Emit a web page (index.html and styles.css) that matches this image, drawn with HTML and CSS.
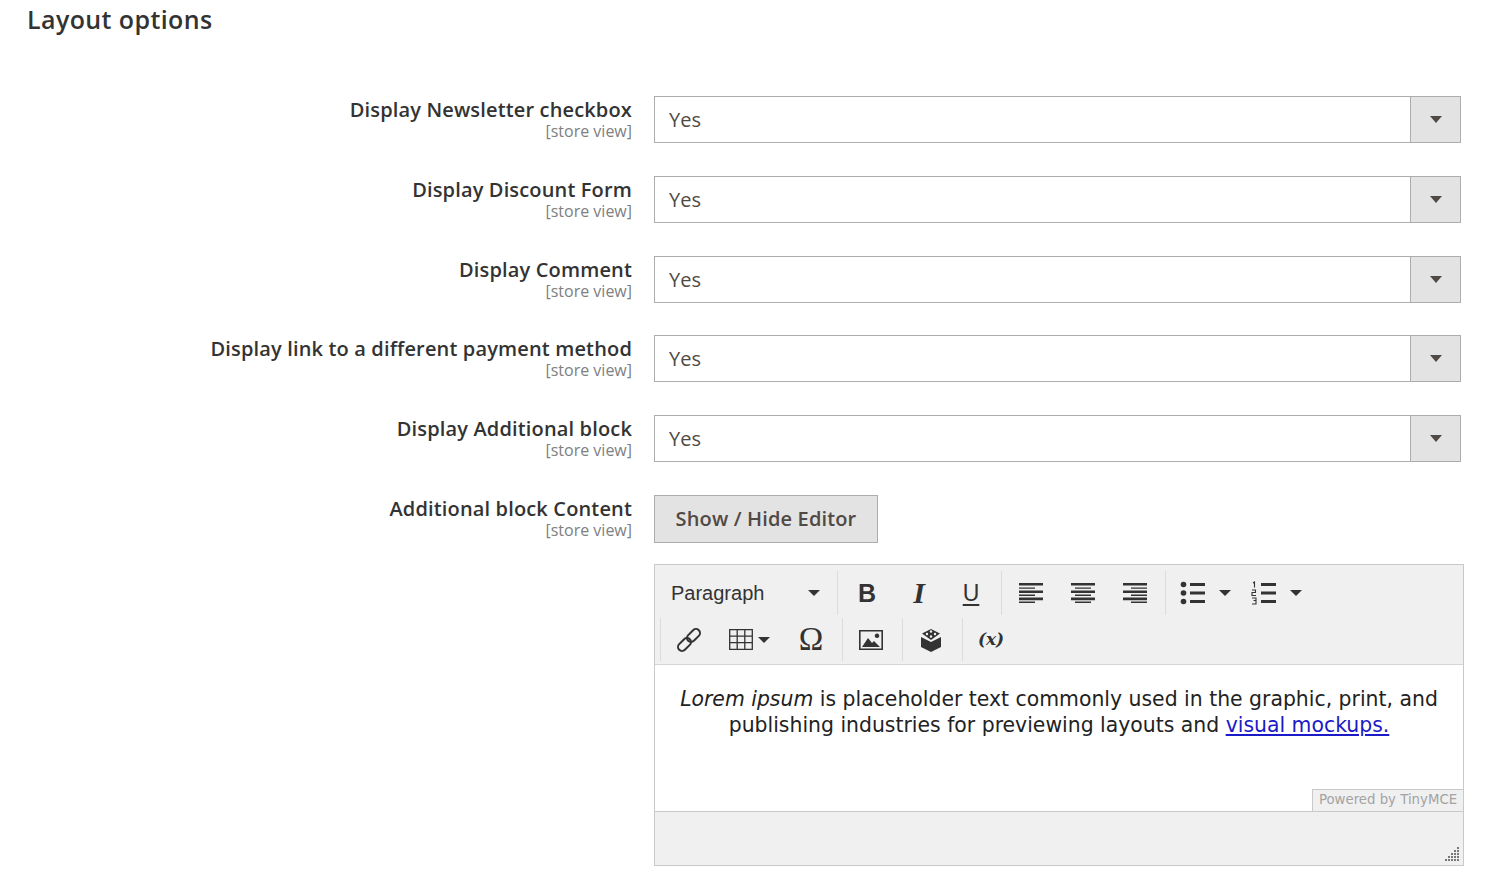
FILE: index.html
```html
<!DOCTYPE html>
<html lang="en">
<head>
    <meta charset="UTF-8">
    <title>Layout options</title>
    <link rel="stylesheet" href="styles.css">
</head>
<body>
    <h1 class="section-title">Layout options</h1>

    <div class="form-row">
        <div class="field-label"><label>Display Newsletter checkbox</label><span class="scope">[store view]</span></div>
        <div class="select-box"><select><option>Yes</option><option>No</option></select><span class="select-arrow"></span></div>
    </div>
    <div class="form-row">
        <div class="field-label"><label>Display Discount Form</label><span class="scope">[store view]</span></div>
        <div class="select-box"><select><option>Yes</option><option>No</option></select><span class="select-arrow"></span></div>
    </div>
    <div class="form-row">
        <div class="field-label"><label>Display Comment</label><span class="scope">[store view]</span></div>
        <div class="select-box"><select><option>Yes</option><option>No</option></select><span class="select-arrow"></span></div>
    </div>
    <div class="form-row">
        <div class="field-label"><label>Display link to a different payment method</label><span class="scope">[store view]</span></div>
        <div class="select-box"><select><option>Yes</option><option>No</option></select><span class="select-arrow"></span></div>
    </div>
    <div class="form-row">
        <div class="field-label"><label>Display Additional block</label><span class="scope">[store view]</span></div>
        <div class="select-box"><select><option>Yes</option><option>No</option></select><span class="select-arrow"></span></div>
    </div>

    <div class="form-row editor-row">
        <div class="field-label"><label>Additional block Content</label><span class="scope">[store view]</span></div>
        <div class="editor-col">
            <button class="toggle-btn">Show / Hide Editor</button>
            <div class="editor">
                <div class="toolbar">
                    <div class="tool-row">
                        <div class="format-select">Paragraph<span class="caret"></span></div>
                        <div class="tool-group">
                            <span class="tool tool-bold">B</span>
                            <span class="tool tool-italic">I</span>
                            <span class="tool tool-underline">U</span>
                        </div>
                        <div class="tool-group">
                            <span class="tool">
                                <svg width="26" height="22" viewBox="0 0 26 22"><path fill="#333" d="M1 1h24v2.600H1zM1 5.400h16v1.400H1zM1 8.400h24v2.600H1zM1 12.600h16v1.400H1zM1 15.600h24v2.600H1zM1 19.400h16V21H1z"/></svg>
                            </span>
                            <span class="tool">
                                <svg width="26" height="22" viewBox="0 0 26 22"><path fill="#333" d="M1 1h24v2.600H1zM5 5.400h16v1.400H5zM1 8.400h24v2.600H1zM5 12.600h16v1.400H5zM1 15.600h24v2.600H1zM5 19.400h16V21H5z"/></svg>
                            </span>
                            <span class="tool">
                                <svg width="26" height="22" viewBox="0 0 26 22"><path fill="#333" d="M1 1h24v2.600H1zM9 5.400h16v1.400H9zM1 8.400h24v2.600H1zM9 12.600h16v1.400H9zM1 15.600h24v2.600H1zM9 19.400h16V21H9z"/></svg>
                            </span>
                        </div>
                        <div class="tool-group">
                            <span class="tool tool-split">
                                <svg width="26" height="24" viewBox="0 0 26 24"><circle cx="3.500" cy="3.500" r="2.800" fill="#333"/><circle cx="3.500" cy="12" r="2.800" fill="#333"/><circle cx="3.500" cy="20.500" r="2.800" fill="#333"/><path fill="#333" d="M10 2h15v3H10zM10 10.500h15v3H10zM10 19h15v3H10z"/></svg>
                            </span>
                            <span class="tool-caret"><span class="caret"></span></span>
                            <span class="tool tool-split">
                                <svg width="26" height="24" viewBox="0 0 26 24"><path fill="none" stroke="#333" stroke-width="1.100" d="M2 2l1.500-1V6.500M1 9h3.500v2.500H1V14.500h4M1 17h4v2.500H2.500H5V23H1"/><path fill="#333" d="M10 2h15v3H10zM10 10.500h15v3H10zM10 19h15v3H10z"/></svg>
                            </span>
                            <span class="tool-caret"><span class="caret"></span></span>
                        </div>
                    </div>
                    <div class="tool-row tool-row-second">
                        <div class="tool-group">
                            <span class="tool">
                                <svg width="26" height="26" viewBox="0 0 26 26"><g fill="none" stroke="#333" stroke-width="2"><rect x="1" y="13.500" width="15" height="8" rx="4" transform="rotate(-45 8.500 17.500)"/><rect x="10" y="4.500" width="15" height="8" rx="4" transform="rotate(-45 17.500 8.500)"/></g></svg>
                            </span>
                            <span class="tool tool-table">
                                <svg width="24" height="21" viewBox="0 0 24 21"><path fill="none" stroke="#333" stroke-width="1.300" d="M.700.700h22.600v19.600H.700zM.700 7.200h22.600M.700 13.700h22.600M8.200.700v19.600M15.800.700v19.600"/></svg>
                                <span class="caret"></span>
                            </span>
                            <span class="tool tool-omega">Ω</span>
                        </div>
                        <div class="tool-group">
                            <span class="tool">
                                <svg width="24" height="20" viewBox="0 0 24 20"><path fill="none" stroke="#333" stroke-width="1.600" d="M.800.800h22.400v18.400H.800z"/><path fill="#333" d="M3 17l6-9 4 5 2-2 6 6zM18 3.500a2.300 2.300 0 1 0 .010 0z"/></svg>
                            </span>
                        </div>
                        <div class="tool-group">
                            <span class="tool">
                                <svg width="22" height="24" viewBox="0 0 22 24"><path fill="#333" d="M1 9l10 5 10-5v10l-10 5-10-5z"/><path fill="#333" d="M11 1l9 4.500-9 6.500-9-6.500z"/><g fill="#f0f0f0"><circle cx="11" cy="3.500" r="1.200"/><circle cx="7" cy="6" r="1.200"/><circle cx="15" cy="6" r="1.200"/><circle cx="11" cy="8.500" r="1.200"/></g></svg>
                            </span>
                        </div>
                        <div class="tool-group">
                            <span class="tool tool-variable">(x)</span>
                        </div>
                    </div>
                </div>
                <div class="editor-body">
                    <p><em>Lorem ipsum</em> is placeholder text commonly used in the graphic, print, and publishing industries for previewing layouts and <a href="#">visual mockups.</a></p>
                    <div class="powered">Powered by TinyMCE</div>
                </div>
                <div class="editor-footer">
                    <svg class="resize-grip" width="16" height="16" viewBox="0 0 16 16"><path fill="#777" d="M13 1h2v2h-2zM13 4h2v2h-2zM10 4h2v2h-2zM13 7h2v2h-2zM10 7h2v2h-2zM7 7h2v2H7zM13 10h2v2h-2zM10 10h2v2h-2zM7 10h2v2H7zM4 10h2v2H4zM13 13h2v2h-2zM10 13h2v2h-2zM7 13h2v2H7zM4 13h2v2H4zM1 13h2v2H1z"/></svg>
                </div>
            </div>
        </div>
    </div>
</body>
</html>
```

FILE: styles.css
```css
body {
    margin: 0;
    padding: 4px 47px 0 0;
    background-color: #fff;
    font-family: "Open Sans", sans-serif;
    color: #303030;
}

.section-title {
    margin: 0 0 62px 27px;
    font-size: 25px;
    line-height: 30px;
    font-weight: 600;
    letter-spacing: 0.4px;
    color: #333;
}

.form-row {
    display: grid;
    grid-template-columns: 632px 1fr;
    column-gap: 22px;
    margin-bottom: 32.75px;
}

.field-label {
    display: flex;
    flex-direction: column;
    align-items: flex-end;
}

.field-label label {
    font-size: 20px;
    line-height: 27px;
    font-weight: 600;
    letter-spacing: 0.15px;
    color: #333;
}

.scope {
    font-size: 16px;
    line-height: 17px;
    color: #808080;
}

.select-box {
    display: flex;
    height: 47px;
    box-sizing: border-box;
    border: 1px solid #adadad;
}

.select-box select {
    flex: 1;
    appearance: none;
    border: none;
    background: #fff;
    padding: 0 14px;
    font-family: "Open Sans", sans-serif;
    font-size: 20px;
    color: #514943;
}

.select-arrow {
    width: 49px;
    display: flex;
    align-items: center;
    justify-content: center;
    background-color: #e3e3e3;
    border-left: 1px solid #adadad;
}

.select-arrow::after {
    content: "";
    border-style: solid;
    border-width: 7px 6px 0 6px;
    border-color: #514943 transparent transparent transparent;
}

.editor-row {
    margin-bottom: 0;
}

.editor-col {
    display: flex;
    flex-direction: column;
    align-items: flex-start;
}

.toggle-btn {
    height: 48px;
    width: 224px;
    padding: 0;
    background-color: #e3e3e3;
    border: 1px solid #adadad;
    font-family: "Open Sans", sans-serif;
    font-size: 20px;
    font-weight: 600;
    letter-spacing: 0.15px;
    color: #514943;
    cursor: pointer;
}

.editor {
    width: 810px;
    box-sizing: border-box;
    margin-top: 21.25px;
    border: 1px solid #c9c9c9;
    background-color: #f0f0f0;
}

.toolbar {
    height: 100px;
    padding-top: 6px;
    box-sizing: border-box;
    border-bottom: 1px solid #d4d4d4;
}

.tool-row {
    display: flex;
    height: 44px;
}

.tool-row-second {
    margin: 3px 0 0 5px;
    height: 43px;
}

.format-select {
    width: 182px;
    box-sizing: border-box;
    padding: 0 17px 0 16px;
    display: flex;
    align-items: center;
    justify-content: space-between;
    font-family: "Liberation Sans", sans-serif;
    font-size: 20px;
    color: #333;
}

.caret {
    display: inline-block;
    border-style: solid;
    border-width: 6px 6px 0 6px;
    border-color: #333 transparent transparent transparent;
}

.tool-group {
    display: flex;
    border-left: 1px solid #dcdcdc;
    padding: 0 4px 0 3px;
}

.tool-row-second .tool-group {
    padding: 0 5px 0 2px;
}

.tool {
    width: 52px;
    display: flex;
    align-items: center;
    justify-content: center;
    color: #333;
}

.tool-bold {
    font-family: "Liberation Sans", sans-serif;
    font-size: 25px;
    font-weight: 700;
}

.tool-italic {
    font-family: "Liberation Serif", serif;
    font-size: 30px;
    font-weight: 700;
    font-style: italic;
}

.tool-underline {
    font-family: "Liberation Sans", sans-serif;
    font-size: 23px;
    text-decoration: underline;
    text-underline-offset: 3px;
}

.tool-split {
    width: 47px;
}

.tool-caret {
    width: 18px;
    margin-right: 6px;
    display: flex;
    align-items: center;
    justify-content: center;
}

.tool-table {
    width: 70px;
    gap: 5px;
    justify-content: flex-start;
    padding-left: 14px;
    box-sizing: border-box;
}

.tool-omega {
    font-family: "Liberation Serif", serif;
    font-size: 33px;
}

.tool-variable {
    font-family: "DejaVu Serif", serif;
    font-size: 17px;
    font-weight: 700;
    font-style: italic;
    padding-bottom: 2px;
}

.editor-body {
    position: relative;
    height: 147px;
    box-sizing: border-box;
    padding: 21px 20px 0;
    background-color: #fff;
    border-bottom: 1px solid #c9c9c9;
}

.editor-body p {
    margin: 0;
    font-family: "DejaVu Sans", sans-serif;
    font-size: 20.4px;
    line-height: 26px;
    text-align: center;
    color: #222;
}

.editor-body a {
    color: #1a1ac8;
}

.powered {
    position: absolute;
    right: 0;
    bottom: -1px;
    width: 151px;
    height: 23px;
    box-sizing: border-box;
    background-color: #f0f0f0;
    border: 1px solid #c9c9c9;
    border-right: none;
    font-family: "DejaVu Sans", sans-serif;
    font-size: 13.3px;
    line-height: 20px;
    text-align: center;
    color: #a3a3a3;
}

.editor-footer {
    height: 53px;
    display: flex;
    align-items: flex-end;
    justify-content: flex-end;
    padding: 0 3px 3px 0;
    box-sizing: border-box;
}
```
